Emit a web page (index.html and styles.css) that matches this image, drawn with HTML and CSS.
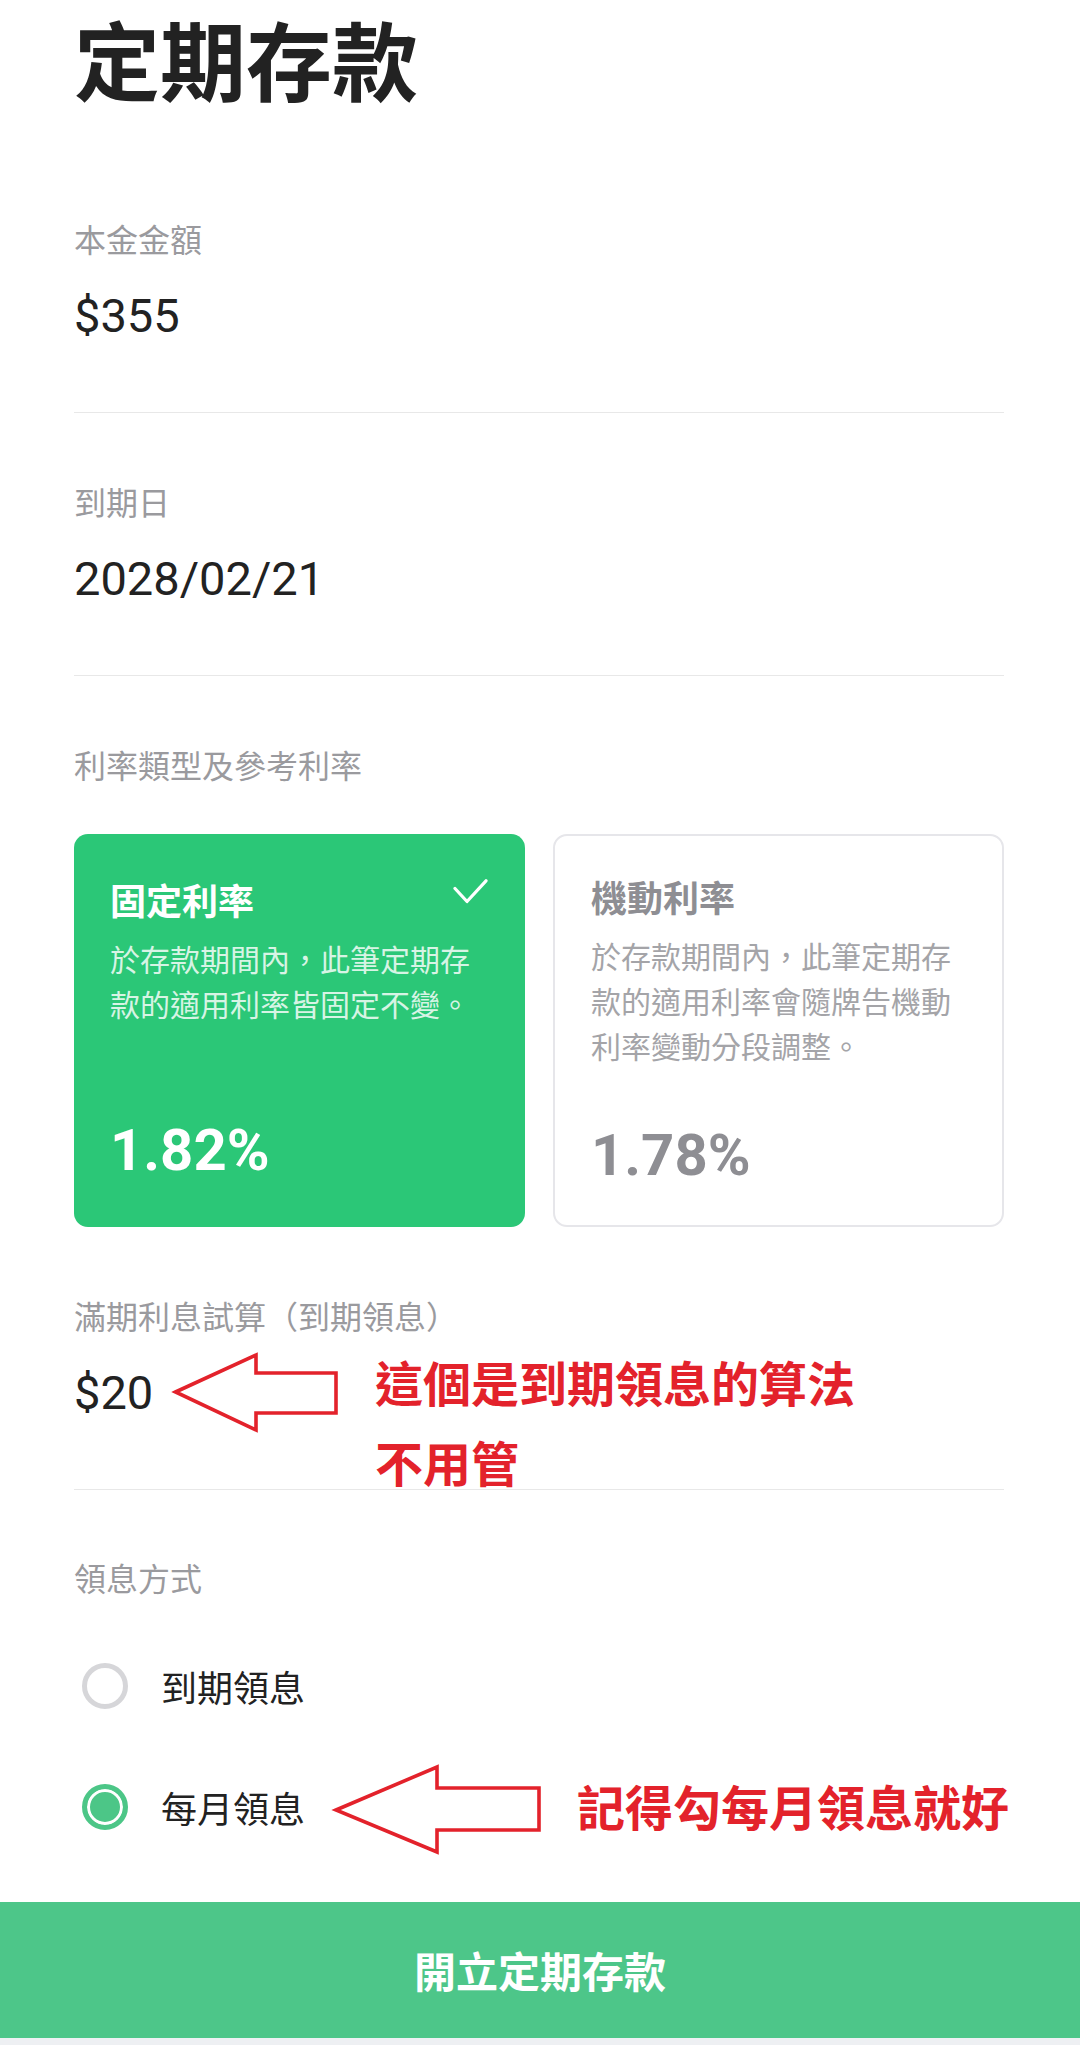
FILE: index.html
```html
<!DOCTYPE html>
<html lang="zh-Hant">
<head>
<meta charset="utf-8">
<title>定期存款</title>
<link rel="stylesheet" href="styles.css">
</head>
<body>
<div class="screen">
  <main class="content">
    <h1 class="title">定期存款</h1>

    <section class="field">
      <div class="label">本金金額</div>
      <div class="value">$355</div>
    </section>

    <section class="field">
      <div class="label">到期日</div>
      <div class="value">2028/02/21</div>
    </section>

    <section class="rates">
      <div class="label">利率類型及參考利率</div>
      <div class="rate-grid">
        <div class="rate-card rate-card--on">
          <div class="rate-head">
            <span class="rate-name">固定利率</span>
            <svg class="check" width="36" height="26" viewBox="0 0 36 26" aria-hidden="true">
              <path d="M2 9.5 L14 22.5 L33 1.8" fill="none" stroke="#ffffff" stroke-width="3.2" stroke-linecap="round" stroke-linejoin="round"/>
            </svg>
          </div>
          <p class="rate-desc">於存款期間內，此筆定期存款的適用利率皆固定不變。</p>
          <div class="rate-value">1.82%</div>
        </div>
        <div class="rate-card rate-card--off">
          <div class="rate-head">
            <span class="rate-name">機動利率</span>
          </div>
          <p class="rate-desc">於存款期間內，此筆定期存款的適用利率會隨牌告機動利率變動分段調整。</p>
          <div class="rate-value">1.78%</div>
        </div>
      </div>
    </section>

    <section class="field">
      <div class="label">滿期利息試算（到期領息）</div>
      <div class="value">$20</div>
    </section>

    <section class="payout">
      <div class="label">領息方式</div>
      <div class="radio-row">
        <span class="radio"></span>
        <span class="radio-text">到期領息</span>
      </div>
      <div class="radio-row">
        <span class="radio radio--on"></span>
        <span class="radio-text">每月領息</span>
      </div>
    </section>
  </main>

  <button class="cta" type="button">開立定期存款</button>
  <div class="bottom-strip"></div>

  <svg class="annot-arrow annot-arrow--one" width="172" height="86" viewBox="0 0 172 86" aria-hidden="true">
    <polygon points="5.5,42 86,5 86,23 166,23 166,63 86,63 86,80" fill="none" stroke="#e3222b" stroke-width="3.6" stroke-linejoin="miter"/>
  </svg>
  <div class="annot-text annot-text--one">這個是到期領息的算法<br>不用管</div>

  <svg class="annot-arrow annot-arrow--two" width="216" height="96" viewBox="0 0 216 96" aria-hidden="true">
    <polygon points="6,48 107,5 107,26 209,26 209,68 107,68 107,90" fill="none" stroke="#e3222b" stroke-width="3.6" stroke-linejoin="miter"/>
  </svg>
  <div class="annot-text annot-text--two">記得勾每月領息就好</div>
</div>
</body>
</html>
```

FILE: styles.css
```css
* {
  box-sizing: border-box;
}

html, body {
  margin: 0;
  padding: 0;
  background: #ffffff;
}

body {
  width: 1080px;
  height: 2045px;
  overflow: hidden;
  font-family: "Noto Sans CJK TC", "Noto Sans", sans-serif;
  color: #222222;
}

.screen {
  position: relative;
  width: 1080px;
  height: 2045px;
}

.content {
  padding: 0 76px 0 74px;
}

.title {
  margin: 0 0 49px;
  padding-top: 15px;
  font-family: "Noto Sans CJK TC", sans-serif;
  font-size: 86px;
  line-height: 86px;
  font-weight: 700;
  color: #222222;
}

.label {
  font-family: "Noto Sans CJK TC", sans-serif;
  font-size: 32px;
  line-height: 44px;
  color: #9a9a9e;
}

.value {
  margin-top: 26px;
  font-family: Roboto, "Noto Sans CJK TC", sans-serif;
  font-size: 47px;
  line-height: 60px;
  color: #222222;
}

.field {
  padding: 66px 0 66px;
  border-bottom: 1px solid #e8e8e8;
}

.rates {
  padding-top: 66px;
}

.rate-grid {
  margin-top: 48px;
  display: grid;
  grid-template-columns: 1fr 1fr;
  gap: 28px;
}

.rate-card {
  height: 393px;
  border-radius: 14px;
  display: flex;
  flex-direction: column;
}

.rate-card--on {
  background: #2bc777;
  padding: 41px 36px 43px 36px;
}

.rate-card--off {
  background: #ffffff;
  border: 2px solid #e6e6ea;
  padding: 36px 36px 36px 36px;
}

.rate-head {
  display: flex;
  justify-content: space-between;
  align-items: flex-start;
}

.rate-name {
  font-size: 36px;
  line-height: 48px;
  font-weight: 700;
}

.rate-card--on .rate-name {
  color: #ffffff;
}

.rate-card--off .rate-name {
  color: #8e8e93;
}

.check {
  display: block;
  margin-top: 4px;
}

.rate-desc {
  margin: 13px 0 0;
  font-size: 30px;
  line-height: 45px;
}

.rate-card--on .rate-desc {
  color: rgba(255, 255, 255, 0.82);
}

.rate-card--off .rate-desc {
  color: #a4a4a8;
}

.rate-value {
  margin-top: auto;
  font-family: Roboto, sans-serif;
  font-size: 58px;
  line-height: 68px;
  font-weight: 700;
}

.rate-card--on .rate-value {
  color: #ffffff;
}

.rate-card--off .rate-value {
  color: #8e8e93;
}

.payout {
  padding-top: 65px;
}

.payout .label {
  margin-bottom: 26px;
}

.radio-row {
  height: 121px;
  display: flex;
  align-items: center;
}

.radio {
  width: 46px;
  height: 46px;
  margin-left: 8px;
  border-radius: 50%;
  border: 5px solid #d6d6d9;
  background: #ffffff;
  flex: none;
}

.radio--on {
  border-color: #4cc687;
  background: #4cc687;
  box-shadow: inset 0 0 0 3px #ffffff;
}

.radio-text {
  margin-left: 33px;
  font-size: 36px;
  line-height: 48px;
  color: #222222;
}

.cta {
  display: block;
  width: 1080px;
  height: 136px;
  margin: 35px 0 0;
  padding: 0;
  border: 0;
  appearance: none;
  background: #4dc689;
  color: #ffffff;
  font-family: "Noto Sans CJK TC", sans-serif;
  font-size: 42px;
  line-height: 136px;
  font-weight: 700;
  text-align: center;
}

.bottom-strip {
  height: 7px;
  background: #eef0f3;
}

/* red annotations drawn over the screenshot */
.annot-arrow {
  position: absolute;
  display: block;
}

.annot-arrow--one {
  left: 170px;
  top: 1350px;
}

.annot-arrow--two {
  left: 330px;
  top: 1762px;
}

.annot-text {
  position: absolute;
  font-family: "Noto Sans CJK TC", sans-serif;
  font-size: 48px;
  line-height: 80px;
  font-weight: 700;
  color: #e3222b;
  white-space: nowrap;
}

.annot-text--one {
  left: 375px;
  top: 1341px;
}

.annot-text--two {
  left: 577px;
  top: 1765px;
}
```
